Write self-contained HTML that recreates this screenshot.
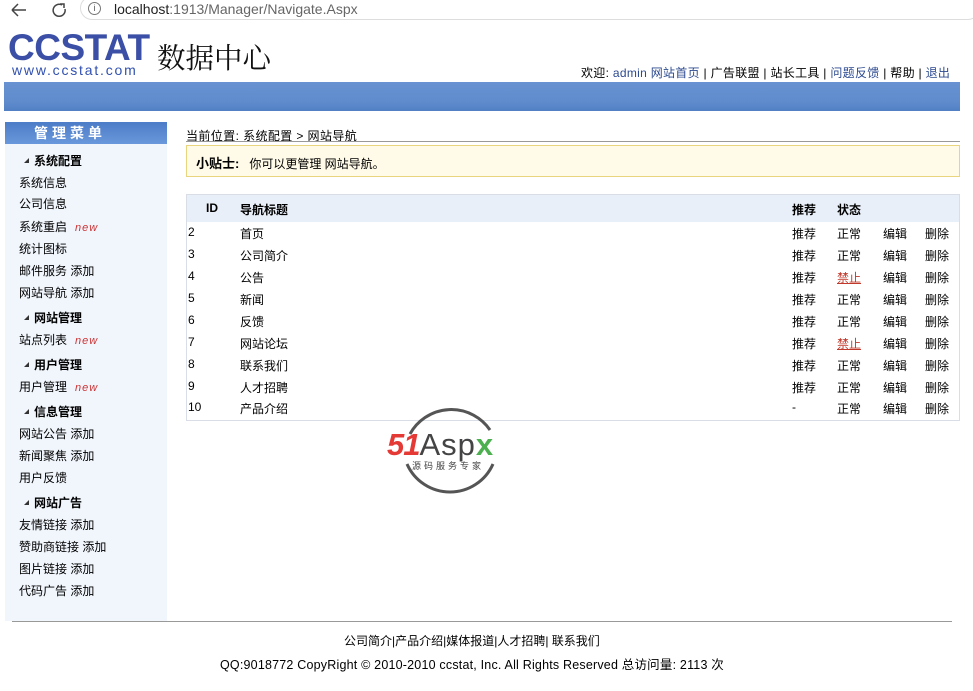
<!DOCTYPE html>
<html><head><meta charset="utf-8"><style>
*{margin:0;padding:0;box-sizing:border-box}
body{width:973px;height:691px;overflow:hidden;background:#fff;font-family:"Liberation Sans","Noto Sans CJK SC",sans-serif;font-size:12px;color:#000;position:relative}
.a{position:absolute;white-space:nowrap}
.side div{position:absolute;left:19px;white-space:nowrap;font-size:12px}
.side .h{left:24px;font-weight:bold}
.side .h:before{content:"";display:inline-block;width:0;height:0;border-left:5px solid transparent;border-bottom:5px solid #333;margin-right:5px;vertical-align:2px}
.new{color:#c33;font-style:italic;font-size:11px;margin-left:8px;letter-spacing:1px}
.row{position:absolute;left:187px;width:772px;height:22px;font-size:12px}
.row span{position:absolute;top:4px}
.red{color:#c0392b;text-decoration:underline}
</style></head><body>
<div class="a" style="left:0;top:0;width:973px;height:24px;background:#fff"></div>
<svg class="a" style="left:10px;top:1px" width="60" height="18"><path d="M2 9h14M2 9l6-6M2 9l6 6" stroke="#444" stroke-width="1.5" fill="none"/><path d="M52 4a6 6 0 1 0 3 4" stroke="#444" stroke-width="1.5" fill="none"/><path d="M50 3h4v4" stroke="#444" stroke-width="1.5" fill="none"/></svg>
<div class="a" style="left:80px;top:-4px;width:900px;height:24px;border:1px solid #ddd;border-radius:12px;background:#fff"></div>
<div class="a" style="left:88px;top:2px;width:13px;height:13px;border:1px solid #777;border-radius:50%;font-size:9px;text-align:center;line-height:11px;color:#555">i</div>
<div class="a" style="left:114px;top:1px;font-size:14px;color:#222">localhost<span style="color:#666">:1913/Manager/Navigate.Aspx</span></div>
<div class="a" style="left:8px;top:29px;font-size:37px;font-weight:bold;letter-spacing:-0.5px;color:#3a4fa5;line-height:37px">CCSTAT</div>
<div class="a" style="left:12px;top:63px;font-size:14px;color:#3050b0;letter-spacing:1.8px;line-height:14px">www.ccstat.com</div>
<div class="a" style="left:157px;top:41px;font-size:28.5px;color:#111;line-height:32px;font-family:'Noto Serif CJK SC','Noto Sans CJK SC',serif">数据中心</div>
<div class="a" style="left:581px;top:64px;font-size:12px;letter-spacing:0.3px">欢迎: <span style="color:#2d4a8f">admin 网站首页</span> | 广告联盟 | 站长工具 | <span style="color:#2d4a8f">问题反馈</span> | 帮助 | <span style="color:#2d4a8f">退出</span></div>
<div class="a" style="left:4px;top:82px;width:956px;height:29px;background:linear-gradient(#6892d2,#5f8bcc 70%,#5080c4)"></div>
<div class="a side" style="left:5px;top:122px;width:162px;height:499px;background:#f1f6fd">
<div style="left:0;top:0;width:162px;height:22px;background:linear-gradient(#4d7cc8,#6a98db);color:#fff;font-weight:bold;font-size:14px;letter-spacing:4px;text-align:left;padding-left:29px;line-height:22px">管理菜单</div>
</div>
<div class="side">
<div class="h" style="top:152px">系统配置</div>
<div style="top:174px">系统信息</div>
<div style="top:195px">公司信息</div>
<div style="top:218px">系统重启<span class="new">new</span></div>
<div style="top:240px">统计图标</div>
<div style="top:262px">邮件服务 添加</div>
<div style="top:284px">网站导航 添加</div>
<div class="h" style="top:309px">网站管理</div>
<div style="top:331px">站点列表<span class="new">new</span></div>
<div class="h" style="top:356px">用户管理</div>
<div style="top:378px">用户管理<span class="new">new</span></div>
<div class="h" style="top:403px">信息管理</div>
<div style="top:425px">网站公告 添加</div>
<div style="top:447px">新闻聚焦 添加</div>
<div style="top:469px">用户反馈</div>
<div class="h" style="top:494px">网站广告</div>
<div style="top:516px">友情链接 添加</div>
<div style="top:538px">赞助商链接 添加</div>
<div style="top:560px">图片链接 添加</div>
<div style="top:582px">代码广告 添加</div>
</div>
<div class="a" style="left:186px;top:127px;font-size:12px;letter-spacing:0.4px">当前位置: 系统配置 &gt; 网站导航</div>
<div class="a" style="left:186px;top:141px;width:774px;height:1px;background:#999"></div>
<div class="a" style="left:186px;top:145px;width:774px;height:32px;background:#fffbe8;border:1px solid #e8d57e"></div>
<div class="a" style="left:196px;top:153px;font-size:12px"><b style="font-size:13px">小贴士:</b>&nbsp;&nbsp; 你可以更管理 网站导航。</div>
<div class="a" style="left:186px;top:194px;width:774px;height:227px;border:1px solid #d8dde6"></div>
<div class="a" style="left:187px;top:195px;width:772px;height:27px;background:#e9eff8;font-weight:bold">
<span class="a" style="left:19px;top:6px">ID</span><span class="a" style="left:53px;top:6px">导航标题</span><span class="a" style="left:605px;top:6px">推荐</span><span class="a" style="left:650px;top:6px">状态</span></div>
<div class="row" style="top:221px"><span style="left:1px">2</span><span style="left:53px">首页</span><span style="left:605px">推荐</span><span style="left:650px">正常</span><span style="left:696px">编辑</span><span style="left:738px">删除</span></div>
<div class="row" style="top:243px"><span style="left:1px">3</span><span style="left:53px">公司简介</span><span style="left:605px">推荐</span><span style="left:650px">正常</span><span style="left:696px">编辑</span><span style="left:738px">删除</span></div>
<div class="row" style="top:265px"><span style="left:1px">4</span><span style="left:53px">公告</span><span style="left:605px">推荐</span><span style="left:650px" class="red">禁止</span><span style="left:696px">编辑</span><span style="left:738px">删除</span></div>
<div class="row" style="top:287px"><span style="left:1px">5</span><span style="left:53px">新闻</span><span style="left:605px">推荐</span><span style="left:650px">正常</span><span style="left:696px">编辑</span><span style="left:738px">删除</span></div>
<div class="row" style="top:309px"><span style="left:1px">6</span><span style="left:53px">反馈</span><span style="left:605px">推荐</span><span style="left:650px">正常</span><span style="left:696px">编辑</span><span style="left:738px">删除</span></div>
<div class="row" style="top:331px"><span style="left:1px">7</span><span style="left:53px">网站论坛</span><span style="left:605px">推荐</span><span style="left:650px" class="red">禁止</span><span style="left:696px">编辑</span><span style="left:738px">删除</span></div>
<div class="row" style="top:353px"><span style="left:1px">8</span><span style="left:53px">联系我们</span><span style="left:605px">推荐</span><span style="left:650px">正常</span><span style="left:696px">编辑</span><span style="left:738px">删除</span></div>
<div class="row" style="top:375px"><span style="left:1px">9</span><span style="left:53px">人才招聘</span><span style="left:605px">推荐</span><span style="left:650px">正常</span><span style="left:696px">编辑</span><span style="left:738px">删除</span></div>
<div class="row" style="top:396px"><span style="left:1px">10</span><span style="left:53px">产品介绍</span><span style="left:605px">-</span><span style="left:650px">正常</span><span style="left:696px">编辑</span><span style="left:738px">删除</span></div>
<svg class="a" style="left:385px;top:402px" width="130" height="92"><path d="M25 32 A47 47 0 0 1 105 28" stroke="#555" stroke-width="3" fill="none"/><path d="M22 62 A47 47 0 0 0 108 62" stroke="#555" stroke-width="3" fill="none"/></svg>
<div class="a" style="left:387px;top:428px;font-size:31px;font-weight:bold;font-style:italic;color:#e53935;letter-spacing:-1px;line-height:34px">51<span style="color:#444;font-style:normal;font-weight:normal;letter-spacing:1px">Asp</span><span style="color:#4caf50;font-style:normal">x</span></div>
<div class="a" style="left:412px;top:459px;font-size:9px;color:#444;letter-spacing:3px">源码服务专家</div>
<div class="a" style="left:12px;top:621px;width:940px;height:1px;background:#999"></div>
<div class="a" style="left:344px;top:632px;font-size:12px">公司简介|产品介绍|媒体报道|人才招聘| 联系我们</div>
<div class="a" style="left:220px;top:654px;font-size:12.5px;letter-spacing:0.2px">QQ:9018772 CopyRight © 2010-2010 ccstat, Inc. All Rights Reserved 总访问量: 2113 次</div>
</body></html>
